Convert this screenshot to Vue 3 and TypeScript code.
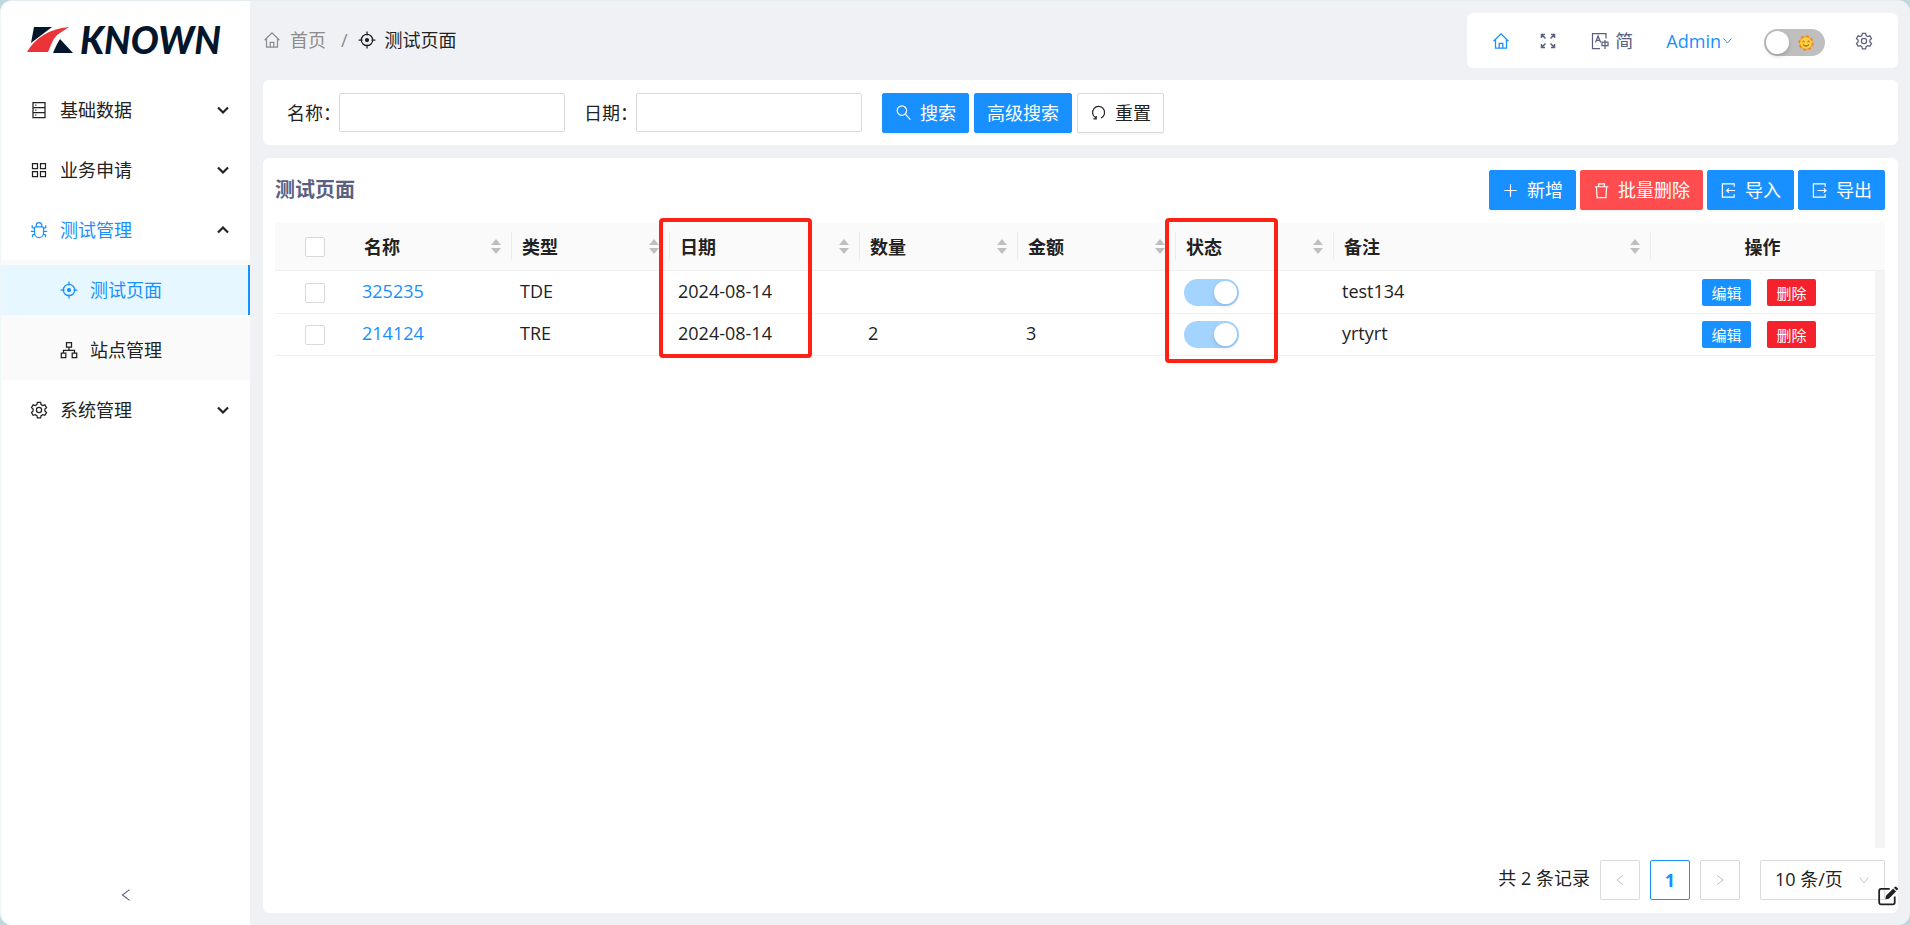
<script setup lang="ts">
import { h, ref } from 'vue'

const glyphs: Record<string, string> = {
  home: '<path d="M1.5 9.2 9 1.8l7.500 7.400M3.500 8v8h11V8M7.200 16v-4.700h3.600V16"/>',
  aim: '<circle cx="9" cy="9" r="5.700"/><circle cx="9" cy="9" r="1.500" fill="currentColor"/><path d="M9 .6v4M9 13.400v4M.6 9h4M13.400 9h4"/>',
  database: '<path d="M3 1.500h12v15H3zM3 6.500h12M3 11.500h12M5.200 4h1.200M5.200 9h1.200M5.200 14h1.200"/>',
  apps: '<path d="M2.500 2.500h5v5h-5zM10.500 2.500h5v5h-5zM2.500 10.500h5v5h-5zM10.500 10.500h5v5h-5z"/>',
  bug: '<path d="M5.500 5.800h7a1 1 0 0 1 1 1V12a4.500 4.500 0 0 1-9 0V6.800a1 1 0 0 1 1-1zM6.300 5.500V4.300a2.700 2.700 0 0 1 5.400 0v1.200M4.500 7.300 2.200 6.500V4.200M13.500 7.300l2.300-.8V4.200M.8 10.300h3.600M13.600 10.300h3.600M4.800 13.200l-2.300.8v2.300M13.200 13.200l2.300.8v2.300"/>',
  cluster: '<path d="M6.500 1.500h5v4.500h-5zM1.300 12h4.500v4.500H1.300zM12.200 12h4.500v4.500h-4.500zM9 6v3.300M3.500 12V9.300h11V12"/>',
  setting: '<path d="M7.400 1.300h3.200l.5 2.200 1.700 1 2.100-.7 1.600 2.800-1.600 1.500v1.900l1.600 1.500-1.600 2.800-2.100-.7-1.700 1-.5 2.200H7.400l-.5-2.200-1.700-1-2.100.7-1.600-2.800L3.100 10V8.100L1.500 6.600l1.600-2.800 2.100.7 1.700-1z"/><circle cx="9" cy="9" r="2.600"/>',
  expand: '<path d="M2.500 6V2.500H6M2.500 2.500l4 4M12 2.500h3.500V6M15.500 2.500l-4 4M2.500 12v3.500H6M2.500 15.500l4-4M15.500 12v3.500H12M15.500 15.500l-4-4"/>',
  translate: '<path d="M15 6.500v-5H1.500v15H9M4.500 10.500l2.600-6.500 2.500 6.500M5.400 8.300h3.300M11 10h6v3.500h-6zM14 8v9"/>',
  down: '<path d="m3.500 6 5.500 6.500L14.500 6"/>',
  left: '<path d="M13 3 5 9l8 6"/>',
  right: '<path d="m5 3 8 6-8 6"/>',
  chevron: '<path d="m4 6.500 5 5 5-5" stroke-width="2.200"/>',
  search: '<circle cx="7.300" cy="7" r="5"/><path d="m11 10.800 5.300 5.700"/>',
  reload: '<path d="M11.600 14.900A6.400 6.400 0 1 0 6.200 14.700M3.600 15.800h3v-3"/>',
  plus: '<path d="M9 2.500v13M2.500 9h13"/>',
  trash: '<path d="M1.800 5h14.400M6 5V2h6v3M3.600 5l.7 11.500h9.400L14.400 5"/>',
  importIcon: '<path d="M15 5V2H2.500v14H15v-3M16 9H7M9.500 6.700 7 9l2.500 2.300"/>',
  exportIcon: '<path d="M15 5V2H2.500v14H15v-3M7 9h9M13.500 6.700 16 9l-2.500 2.300"/>',
  edit: '<path d="M11 2.500H3.200A1.700 1.700 0 0 0 1.500 4.200v10.600a1.700 1.700 0 0 0 1.700 1.700h10.600a1.700 1.700 0 0 0 1.700-1.700V9.500" stroke-width="1.600"/><path d="m7.600 8.800 6.500-6.500 2.600 2.600-6.500 6.500-3.200.7zM14.800 1.600l1-1a.7.700 0 0 1 1 0l1.500 1.500a.7.700 0 0 1 0 1l-1 1z" fill="currentColor" stroke="none"/>',
}

const Icon = (props: { name: string }) =>
  h('svg', {
    class: 'icon',
    viewBox: '0 0 18 18',
    'aria-hidden': 'true',
    innerHTML: glyphs[props.name],
  })

interface Column {
  key: string
  title: string
  mark?: string
}

const columns: Column[] = [
  { key: 'name', title: '名称' },
  { key: 'type', title: '类型' },
  { key: 'date', title: '日期', mark: 'mark-date' },
  { key: 'qty', title: '数量' },
  { key: 'amount', title: '金额' },
  { key: 'status', title: '状态', mark: 'mark-status' },
  { key: 'note', title: '备注' },
]

const rows = [
  { name: '325235', type: 'TDE', date: '2024-08-14', qty: '', amount: '', status: true, note: 'test134' },
  { name: '214124', type: 'TRE', date: '2024-08-14', qty: '2', amount: '3', status: true, note: 'yrtyrt' },
]

const menu = [
  { label: '基础数据', icon: 'database' },
  { label: '业务申请', icon: 'apps' },
  {
    label: '测试管理',
    icon: 'bug',
    open: true,
    children: [
      { label: '测试页面', icon: 'aim', active: true },
      { label: '站点管理', icon: 'cluster', active: false },
    ],
  },
  { label: '系统管理', icon: 'setting' },
]

const keyword = ref('')
const date = ref('')
const dark = ref(false)
</script>

<template>
  <div class="app">
    <aside class="sider">
      <a class="logo" href="#" aria-label="KNOWN">
        <svg class="logo-mark" viewBox="0 0 46 28" aria-hidden="true">
          <path d="M7 1h18L4 17z" fill="#04162b" />
          <path d="M42 1 30 9c-5 5-6 11-9 17H0C8 12 22 3 42 1z" fill="#ec3338" />
          <path d="m33 13 13 14H26c2-5 4-9 7-14z" fill="#04162b" />
        </svg>
        <span class="logo-text">KNOWN</span>
      </a>
      <nav class="menu">
        <div v-for="item in menu" :key="item.label" class="menu-group">
          <button type="button" class="menu-item" :class="{ open: item.open }">
            <Icon :name="item.icon" />
            <span>{{ item.label }}</span>
            <Icon name="chevron" class="menu-arrow" />
          </button>
          <div v-if="item.children" class="submenu">
            <a
              v-for="child in item.children"
              :key="child.label"
              href="#"
              class="menu-item sub"
              :class="{ active: child.active }"
            >
              <Icon :name="child.icon" />
              <span>{{ child.label }}</span>
            </a>
          </div>
        </div>
      </nav>
      <button type="button" class="collapse" aria-label="收起菜单"><Icon name="left" /></button>
    </aside>

    <div class="main">
      <header class="header">
        <nav class="breadcrumb">
          <a href="#"><Icon name="home" />首页</a>
          <span class="slash">/</span>
          <span class="current"><Icon name="aim" />测试页面</span>
        </nav>
        <div class="toolbar">
          <a href="#" class="tool-home" aria-label="首页"><Icon name="home" /></a>
          <button type="button" class="tool-full" aria-label="全屏"><Icon name="expand" /></button>
          <button type="button" class="tool-lang"><Icon name="translate" />简</button>
          <a href="#" class="tool-user">Admin<Icon name="down" /></a>
          <label class="theme">
            <input v-model="dark" type="checkbox" aria-label="主题" />
            <svg class="sun" viewBox="0 0 16 16" aria-hidden="true">
              <circle cx="8" cy="8" r="6.700" fill="#f7a02b" stroke="#f58220" stroke-width="2" stroke-dasharray="2.600 2.660" />
              <circle cx="8" cy="8" r="5.800" fill="#ffcf3f" />
              <path d="M4.500 6.800q1-1.200 2 0M9.500 6.800q1-1.200 2 0M5 9.500q3 3.200 6 0" fill="none" stroke="#7a4a1d" stroke-width="1" />
            </svg>
          </label>
          <button type="button" class="tool-set" aria-label="设置"><Icon name="setting" /></button>
        </div>
      </header>

      <form class="card search" @submit.prevent>
        <label for="q-name">名称：</label>
        <input id="q-name" v-model="keyword" type="text" />
        <label for="q-date" class="second">日期：</label>
        <input id="q-date" v-model="date" type="text" />
        <div class="search-actions">
          <button type="submit" class="btn primary"><Icon name="search" />搜索</button>
          <button type="button" class="btn primary">高级搜索</button>
          <button type="reset" class="btn"><Icon name="reload" />重置</button>
        </div>
      </form>

      <section class="card content">
        <div class="content-head">
          <h1>测试页面</h1>
          <div class="actions">
            <button type="button" class="btn primary"><Icon name="plus" />新增</button>
            <button type="button" class="btn danger"><Icon name="trash" />批量删除</button>
            <button type="button" class="btn primary"><Icon name="importIcon" />导入</button>
            <button type="button" class="btn primary"><Icon name="exportIcon" />导出</button>
          </div>
        </div>

        <div class="grid-head">
          <table>
            <colgroup>
              <col class="c-check" />
              <col v-for="c in columns" :key="c.key" :class="'c-' + c.key" />
              <col class="c-action" />
            </colgroup>
            <thead>
              <tr>
                <th class="check"><input type="checkbox" aria-label="全选" /></th>
                <th v-for="c in columns" :key="c.key" class="sortable">
                  <div class="th-inner">
                    <span>{{ c.title }}</span>
                    <svg class="sorter" viewBox="0 0 10 15" aria-hidden="true">
                      <path d="M0 6h10L5 0zM0 9h10l-5 6z" />
                    </svg>
                  </div>
                  <i v-if="c.mark" class="mark" :class="c.mark"></i>
                </th>
                <th class="op">操作</th>
              </tr>
            </thead>
          </table>
        </div>
        <div class="grid-body">
          <table>
            <colgroup>
              <col class="c-check" />
              <col v-for="c in columns" :key="c.key" :class="'c-' + c.key" />
              <col class="c-action" />
            </colgroup>
            <tbody>
              <tr v-for="r in rows" :key="r.name">
                <td class="check"><input type="checkbox" :aria-label="'选择 ' + r.name" /></td>
                <td class="text"><a href="#">{{ r.name }}</a></td>
                <td class="text">{{ r.type }}</td>
                <td class="text">{{ r.date }}</td>
                <td class="text">{{ r.qty }}</td>
                <td class="text">{{ r.amount }}</td>
                <td>
                  <input class="switch" type="checkbox" :checked="r.status" disabled :aria-label="'状态 ' + r.name" />
                </td>
                <td class="text">{{ r.note }}</td>
                <td class="op">
                  <div class="row-actions">
                    <button type="button" class="tag edit">编辑</button>
                    <button type="button" class="tag delete">删除</button>
                  </div>
                </td>
              </tr>
            </tbody>
          </table>
          <div class="track"></div>
        </div>

        <footer class="pager">
          <span class="total">共 2 条记录</span>
          <button type="button" class="page" disabled aria-label="上一页"><Icon name="left" /></button>
          <button type="button" class="page current-page">1</button>
          <button type="button" class="page" disabled aria-label="下一页"><Icon name="right" /></button>
          <div class="size">
            <select aria-label="每页条数">
              <option>10 条/页</option>
            </select>
            <Icon name="down" />
          </div>
        </footer>
      </section>
    </div>
    <button type="button" class="float-edit" aria-label="编辑页面"><Icon name="edit" /></button>
  </div>
</template>

<style>
html,
body,
#app {
  height: 100%;
}
body {
  margin: 0;
  background: #bfd8dc;
}
</style>

<style scoped>
.app {
  position: relative;
  display: flex;
  height: 100%;
  overflow: hidden;
  box-sizing: border-box;
  border-top: 1px solid #e5edf0;
  border-left: 1px solid #eef6f7;
  border-radius: 12px;
  background: #f0f1f5;
  color: #222;
  font: 18px/28px "Open Sans", "Noto Sans CJK SC", sans-serif;
}
.app *,
.app *::before {
  box-sizing: border-box;
}
button,
input,
select {
  margin: 0;
  font: inherit;
  color: inherit;
}
button {
  padding: 0;
  border: 0;
  background: none;
  cursor: pointer;
}
a {
  color: #1890ff;
  text-decoration: none;
}
.icon {
  flex: none;
  width: 18px;
  height: 18px;
  fill: none;
  stroke: currentColor;
  stroke-width: 1.25;
}

/* sidebar */
.sider {
  display: flex;
  flex: none;
  flex-direction: column;
  width: 249px;
  background: #fff;
}
.logo {
  display: flex;
  align-items: center;
  height: 79px;
  padding: 0 0 2px 26px;
  gap: 7px;
  color: #04162b;
}
.logo-mark {
  width: 46px;
  height: 28px;
}
.logo-text {
  font: italic 900 37px/40px Lato, "Open Sans", sans-serif;
}
.menu {
  flex: 1;
}
.menu-group {
  padding-top: 5px;
}
.menu-item {
  display: flex;
  align-items: center;
  width: 100%;
  height: 50px;
  margin-bottom: 5px;
  padding: 0 18px 0 29px;
  gap: 12px;
  color: #222;
  text-align: left;
}
.menu-item.open {
  color: #1890ff;
}
.menu-arrow {
  margin-left: auto;
  color: #222;
}
.open .menu-arrow {
  transform: rotate(180deg);
}
.submenu {
  padding: 5px 0;
  background: #fafafa;
}
.submenu .sub {
  margin: 0 0 10px;
  padding-left: 59px;
}
.submenu .sub:last-child {
  margin-bottom: 0;
}
.submenu .active {
  border-right: 2px solid #1890ff;
  background: #e6f7ff;
  color: #1890ff;
}
.collapse {
  display: flex;
  align-items: center;
  justify-content: center;
  height: 60px;
  color: #5a607f;
}
.collapse .icon {
  width: 16px;
  height: 16px;
}

/* header */
.main {
  display: flex;
  flex: 1;
  flex-direction: column;
  min-width: 0;
  padding: 12px 12px 12px 13px;
}
.header {
  display: flex;
  justify-content: space-between;
  height: 55px;
  margin-bottom: 12px;
}
.breadcrumb {
  display: flex;
  align-items: center;
  height: 54px;
  color: #8c8c8c;
}
.breadcrumb a,
.breadcrumb .current {
  display: flex;
  align-items: center;
  gap: 9px;
  color: #8c8c8c;
}
.breadcrumb .current {
  color: #222;
}
.slash {
  margin: 0 10px 0 15px;
}
.toolbar {
  display: flex;
  align-items: center;
  padding: 0 25px;
  border-radius: 6px;
  background: #fff;
  color: #5a607f;
}
.toolbar a,
.toolbar button {
  display: flex;
  align-items: center;
}
.tool-full {
  margin: 0 34px 0 29px;
}
.tool-full .icon {
  stroke-width: 1.500;
}
.tool-lang {
  gap: 6px;
}
.tool-user {
  margin: 0 30px 0 33px;
}
.tool-user .icon {
  width: 13px;
  height: 13px;
}
.theme {
  position: relative;
  display: flex;
  margin: 3px 30px 0 0;
}
.theme input {
  width: 61px;
  height: 27px;
  border-radius: 14px;
  background: #bfbfbf;
  appearance: none;
}
.theme input::before {
  display: block;
  width: 23px;
  height: 23px;
  margin: 2px;
  border-radius: 50%;
  background: #fff;
  box-shadow: 0 2px 4px rgba(0, 35, 11, 0.2);
  content: "";
}
.sun {
  position: absolute;
  top: 6px;
  right: 11px;
  width: 16px;
  height: 16px;
}

/* cards and buttons */
.card {
  border-radius: 6px;
  background: #fff;
}
.search {
  display: flex;
  align-items: center;
  height: 65px;
  flex: none;
  margin-bottom: 13px;
  padding: 0 25px 0 24px;
}
.search .second {
  margin-left: 19px;
}
.search label {
  white-space: nowrap;
  width: 52px;
}
.search input {
  width: 226px;
  height: 39px;
  padding: 4px 12px;
  border: 1px solid #d9d9d9;
  border-radius: 2px;
  background: #fff;
}
.search-actions {
  display: flex;
  margin-left: 20px;
  gap: 5px;
}
.btn {
  display: flex;
  align-items: center;
  height: 40px;
  padding: 0 12px;
  gap: 8px;
  border: 1px solid #d9d9d9;
  border-radius: 2px;
  background: #fff;
  box-shadow: 0 2px 0 rgba(0, 0, 0, 0.03);
  white-space: nowrap;
}
.btn .icon {
  width: 17px;
  height: 17px;
}
.btn.primary {
  border-color: #1890ff;
  background: #1890ff;
  color: #fff;
}
.btn.danger {
  border-color: #ff4d4f;
  background: #ff4d4f;
  color: #fff;
}

/* table card */
.content {
  display: flex;
  flex: 1;
  flex-direction: column;
  min-height: 0;
  padding: 12px 13px 13px 12px;
}
.content-head {
  display: flex;
  align-items: center;
  justify-content: space-between;
  margin-bottom: 13px;
}
h1 {
  margin: 0;
  color: #5a607f;
  font-size: 20px;
  line-height: 28px;
}
.actions {
  display: flex;
  gap: 4px;
}
table {
  width: 100%;
  border-collapse: separate;
  border-spacing: 0;
  table-layout: fixed;
}
.c-check {
  width: 79px;
}
.c-name,
.c-type,
.c-qty,
.c-amount,
.c-status {
  width: 158px;
}
.c-date {
  width: 190px;
}
.c-action {
  width: 224px;
}
.grid-head {
  padding-right: 10px;
  border-bottom: 1px solid #f0f0f0;
  background: #fafafa;
}
th {
  position: relative;
  height: 47px;
  padding: 0 11px 0 10px;
  font-weight: 700;
  text-align: left;
}
th.sortable::after {
  position: absolute;
  top: 9px;
  right: 0;
  width: 1px;
  height: 28px;
  background: #ebebeb;
  content: "";
}
.th-inner {
  display: flex;
  align-items: center;
  justify-content: space-between;
}
.sorter {
  width: 10px;
  height: 15px;
  fill: #bfbfbf;
}
.mark {
  position: absolute;
  z-index: 2;
  top: -5px;
  left: -11px;
  border: 4px solid #ff2113;
  border-radius: 4px;
  pointer-events: none;
}
.mark-date {
  width: 153px;
  height: 140px;
}
.mark-status {
  width: 113px;
  height: 145px;
}
.grid-body {
  display: flex;
  flex: 1;
  align-items: flex-start;
}
.grid-body table {
  margin-top: 1px;
}
.track {
  flex: none;
  align-self: stretch;
  width: 10px;
  background: #f4f4f4;
}
td {
  height: 42px;
  padding: 0 8px;
  border-bottom: 1px solid #f0f0f0;
}
td.text {
  padding-bottom: 4px;
}
.check {
  padding: 0 0 0 30px;
}
.check input {
  display: block;
  width: 20px;
  height: 20px;
  border: 1px solid #d9d9d9;
  border-radius: 2px;
  background: #fff;
  appearance: none;
}
.op {
  text-align: center;
}
.switch {
  display: block;
  width: 55px;
  height: 27px;
  border-radius: 14px;
  background: #a3d3ff;
  appearance: none;
}
.switch::before {
  display: block;
  width: 23px;
  height: 23px;
  margin: 2px 2px 2px 30px;
  border-radius: 50%;
  background: #fff;
  box-shadow: 0 2px 4px rgba(0, 35, 80, 0.15);
  content: "";
}
.row-actions {
  display: flex;
  justify-content: center;
  padding-right: 8px;
  gap: 16px;
}
.tag {
  width: 49px;
  height: 27px;
  border-radius: 2px;
  color: #fff;
  font-size: 15px;
  line-height: 26px;
}
.edit {
  background: #1890ff;
}
.delete {
  background: #f5222d;
}

/* pagination */
.pager {
  display: flex;
  align-items: center;
  justify-content: flex-end;
  margin-top: 12px;
  gap: 10px;
}
.total {
  padding-bottom: 4px;
}
.page {
  display: flex;
  align-items: center;
  justify-content: center;
  width: 40px;
  height: 40px;
  border: 1px solid #d9d9d9;
  border-radius: 2px;
}
.page .icon {
  width: 14px;
  height: 14px;
  color: #bfbfbf;
}
.current-page {
  border-color: #1890ff;
  color: #1890ff;
  font-weight: 700;
}
.size {
  position: relative;
  width: 125px;
  margin-left: 10px;
}
.size select {
  display: block;
  width: 100%;
  height: 40px;
  padding: 0 30px 2px 14px;
  border: 1px solid #d9d9d9;
  border-radius: 2px;
  background: #fff;
  appearance: none;
}
.size .icon {
  position: absolute;
  top: 13px;
  right: 14px;
  width: 14px;
  height: 14px;
  color: #bfbfbf;
  pointer-events: none;
}
.float-edit {
  position: absolute;
  right: 12px;
  bottom: 19px;
  display: flex;
  color: #222;
}
.float-edit .icon {
  width: 21px;
  height: 20px;
}
</style>
